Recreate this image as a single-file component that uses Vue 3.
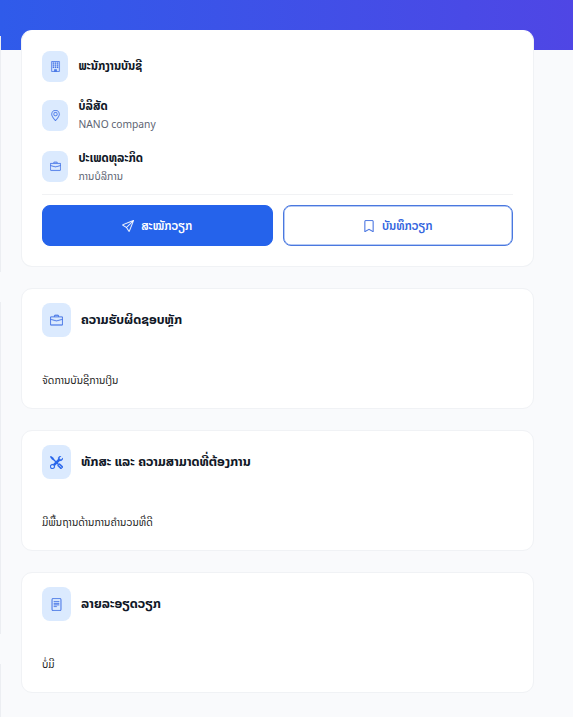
<script setup>
import { h } from 'vue'

const paths = {
  building: [
    'M4 2.5a.5.5 0 0 1 .5-.5h1a.5.5 0 0 1 .5.5v1a.5.5 0 0 1-.5.5h-1a.5.5 0 0 1-.5-.5zm3 0a.5.5 0 0 1 .5-.5h1a.5.5 0 0 1 .5.5v1a.5.5 0 0 1-.5.5h-1a.5.5 0 0 1-.5-.5zm3.5-.5a.5.5 0 0 0-.5.5v1a.5.5 0 0 0 .5.5h1a.5.5 0 0 0 .5-.5v-1a.5.5 0 0 0-.5-.5zM4 5.5a.5.5 0 0 1 .5-.5h1a.5.5 0 0 1 .5.5v1a.5.5 0 0 1-.5.5h-1a.5.5 0 0 1-.5-.5zM7.5 5a.5.5 0 0 0-.5.5v1a.5.5 0 0 0 .5.5h1a.5.5 0 0 0 .5-.5v-1a.5.5 0 0 0-.5-.5zm2.500.5a.5.5 0 0 1 .5-.5h1a.5.5 0 0 1 .5.5v1a.5.5 0 0 1-.5.5h-1a.5.5 0 0 1-.5-.5zM4.500 8a.5.5 0 0 0-.5.5v1a.5.5 0 0 0 .5.5h1a.5.5 0 0 0 .5-.5v-1a.5.5 0 0 0-.5-.5zm2.500.5a.5.5 0 0 1 .5-.5h1a.5.5 0 0 1 .5.5v1a.5.5 0 0 1-.5.5h-1a.5.5 0 0 1-.5-.5zm3.500-.5a.5.5 0 0 0-.5.5v1a.5.5 0 0 0 .5.5h1a.5.5 0 0 0 .5-.5v-1a.5.5 0 0 0-.5-.5z',
    'M2 1a1 1 0 0 1 1-1h10a1 1 0 0 1 1 1v14a1 1 0 0 1-1 1H3a1 1 0 0 1-1-1zm11 0H3v14h3v-2.500a.5.5 0 0 1 .5-.5h3a.5.5 0 0 1 .5.5V15h3z'
  ],
  pin: [
    'M12.166 8.940c-.524 1.062-1.234 2.120-1.960 3.070A32 32 0 0 1 8 14.580a32 32 0 0 1-2.206-2.570c-.726-.950-1.436-2.008-1.960-3.070C3.304 7.867 3 6.862 3 6a5 5 0 0 1 10 0c0 .862-.305 1.867-.834 2.940M8 16s6-5.686 6-10A6 6 0 0 0 2 6c0 4.314 6 10 6 10',
    'M8 8a2 2 0 1 1 0-4 2 2 0 0 1 0 4m0 1a3 3 0 1 0 0-6 3 3 0 0 0 0 6'
  ],
  briefcase: [
    'M6.500 1A1.500 1.500 0 0 0 5 2.500V3H1.500A1.500 1.500 0 0 0 0 4.500v8A1.500 1.500 0 0 0 1.500 14h13a1.500 1.500 0 0 0 1.500-1.500v-8A1.500 1.500 0 0 0 14.500 3H11v-.5A1.500 1.500 0 0 0 9.500 1zm0 1h3a.5.5 0 0 1 .5.5V3H6v-.5a.5.5 0 0 1 .5-.5m1.886 6.914L15 7.151V12.500a.5.5 0 0 1-.5.5h-13a.5.5 0 0 1-.5-.5V7.150l6.614 1.764a1.500 1.500 0 0 0 .772 0M1.500 4h13a.5.5 0 0 1 .5.5v1.616L8.129 7.948a.5.5 0 0 1-.258 0L1 6.116V4.500a.5.5 0 0 1 .5-.5'
  ],
  send: [
    'M15.854.146a.5.5 0 0 1 .11.54l-5.819 14.547a.75.75 0 0 1-1.329.124l-3.178-4.995L.643 7.184a.75.75 0 0 1 .124-1.330L15.314.037a.5.5 0 0 1 .54.11ZM6.636 10.070l2.761 4.338L14.130 2.576zm6.787-8.201L1.591 6.602l4.339 2.760z'
  ],
  bookmark: [
    'M2 2a2 2 0 0 1 2-2h8a2 2 0 0 1 2 2v13.500a.5.5 0 0 1-.777.416L8 13.101l-5.223 2.815A.5.5 0 0 1 2 15.500zm2-1a1 1 0 0 0-1 1v12.566l4.723-2.482a.5.5 0 0 1 .554 0L13 14.566V2a1 1 0 0 0-1-1z'
  ],
  tools: [
    'M1 0 0 1l2.200 3.081a1 1 0 0 0 .815.419h.070a1 1 0 0 1 .708.293l2.675 2.675-2.617 2.654A3.003 3.003 0 0 0 0 13a3 3 0 1 0 5.878-.851l2.654-2.617.968.968-.305.914a1 1 0 0 0 .242 1.023l3.270 3.270a.997.997 0 0 0 1.414 0l1.586-1.586a.997.997 0 0 0 0-1.414l-3.270-3.270a1 1 0 0 0-1.023-.242L10.500 9.500l-.960-.960 2.680-2.643A3.005 3.005 0 0 0 16 3q0-.405-.102-.777l-2.140 2.141L12 4l-.364-1.757L13.777.102a3 3 0 0 0-3.675 3.680L7.462 6.460 4.793 3.793a1 1 0 0 1-.293-.707v-.071a1 1 0 0 0-.419-.814zm9.646 10.646a.5.5 0 0 1 .708 0l2.914 2.915a.5.5 0 0 1-.707.707l-2.915-2.914a.5.5 0 0 1 0-.708M3 11l.471.242.529.026.287.445.445.287.026.529L5 13l-.242.471-.026.529-.445.287-.287.445-.529.026L3 15l-.471-.242L2 14.732l-.287-.445L1.268 14l-.026-.529L1 13l.242-.471.026-.529.445-.287.287-.445.529-.026z'
  ],
  file: [
    'M5 4a.5.5 0 0 0 0 1h6a.5.5 0 0 0 0-1zm-.5 2.500A.5.5 0 0 1 5 6h6a.5.5 0 0 1 0 1H5a.5.5 0 0 1-.5-.5M5 8a.5.5 0 0 0 0 1h6a.5.5 0 0 0 0-1zm0 2a.5.5 0 0 0 0 1h3a.5.5 0 0 0 0-1z',
    'M2 2a2 2 0 0 1 2-2h8a2 2 0 0 1 2 2v12a2 2 0 0 1-2 2H4a2 2 0 0 1-2-2zm10-1H4a1 1 0 0 0-1 1v12a1 1 0 0 0 1 1h8a1 1 0 0 0 1-1V2a1 1 0 0 0-1-1'
  ]
}

const Icon = (props) =>
  h('svg', { viewBox: '0 0 16 16', fill: 'currentColor', stroke: 'currentColor', 'stroke-width': '0.25', 'aria-hidden': 'true' },
    paths[props.name].map((d) => h('path', { d })))
Icon.props = ['name']

const facts = [
  { key: 'role', icon: 'building', label: 'ພະນັກງານບັນຊີ' },
  { key: 'company', icon: 'pin', label: 'ບໍລິສັດ', value: 'NANO company' },
  { key: 'sector', icon: 'briefcase', label: 'ປະເພດທຸລະກິດ', value: 'ການບໍລິການ' }
]

const sections = [
  { key: 'duty', icon: 'briefcase', title: 'ຄວາມຮັບຜິດຊອບຫຼັກ', body: 'ຈັດການບັນຊີການເງິນ' },
  { key: 'skill', icon: 'tools', title: 'ທັກສະ ແລະ ຄວາມສາມາດທີ່ຕ້ອງການ', body: 'ມີພື້ນຖານດ້ານການຄຳນວນທີ່ດີ' },
  { key: 'detail', icon: 'file', title: 'ລາຍລະອຽດວຽກ', body: 'ບໍ່ມີ' }
]
</script>

<template>
  <div class="page">
    <aside class="side">
      <div class="side-card first"></div>
      <div class="side-card second"></div>
      <div class="side-card third"></div>
    </aside>
    <main class="main">
      <section class="card summary">
        <div class="facts">
          <div v-for="f in facts" :key="f.key" class="fact" :class="f.key">
            <span class="badge"><Icon :name="f.icon" /></span>
            <div class="fact-text">
              <strong><span class="t">{{ f.label }}</span></strong>
              <span v-if="f.value" class="value"><span class="t">{{ f.value }}</span></span>
            </div>
          </div>
        </div>
        <div class="actions">
          <button class="btn primary"><Icon name="send" /><span class="t">ສະໝັກວຽກ</span></button>
          <button class="btn outline"><Icon name="bookmark" /><span class="t">ບັນທຶກວຽກ</span></button>
        </div>
      </section>
      <section v-for="s in sections" :key="s.key" class="card section" :class="s.key">
        <header>
          <span class="badge large"><Icon :name="s.icon" /></span>
          <h2><span class="t">{{ s.title }}</span></h2>
        </header>
        <p><span class="t">{{ s.body }}</span></p>
      </section>
    </main>
  </div>
</template>

<style>
body { margin: 0; background: #f9fafc; }
</style>

<style scoped>
* { box-sizing: border-box; }
.page {
  height: 717px;
  overflow: hidden;
  display: flex;
  font-family: "Noto Sans", "Noto Sans Lao", "DejaVu Sans", sans-serif;
  color: #111827;
  background: linear-gradient(90deg, #2f5bea 0%, #4f46e5 100%) 0 0 / 100% 50px no-repeat #f9fafc;
}
.side { width: 1px; flex: none; padding-top: 36px; display: flex; flex-direction: column; gap: 30px; }
.side-card { background: #eceef2; flex: none; }
.first { height: 236px; }
.second { height: 332px; }
.third { height: 60px; }
.main { width: 513px; margin-left: 20px; padding-top: 30px; display: flex; flex-direction: column; gap: 21px; }
.card { background: #fff; border: 1px solid #f0f2f5; border-radius: 11px; padding: 0 20px; flex: none; }
.summary { height: 237px; padding-top: 20px; border-top-color: #fff; }
.t { white-space: nowrap; }
.facts { height: 144px; border-bottom: 1px solid #f1f2f4; }
.fact { height: 31px; display: flex; align-items: center; gap: 10.500px; }
.role .fact-text { padding-bottom: 1px; }
.company { margin-top: 17.500px; }
.sector { margin-top: 20.500px; }
.badge {
  width: 26px; height: 31px; border-radius: 8px; background: #dbeafe; color: #4a78e8;
  display: flex; align-items: center; justify-content: center; flex: none;
}
.badge svg { width: 11px; height: 11px; }
.badge.large { width: 28.500px; height: 34px; border-radius: 8px; }
.badge.large svg { width: 13px; height: 13px; }
.skill .badge { color: #2563eb; }
.fact-text { display: flex; flex-direction: column; }
.fact-text strong { font-size: 11.500px; line-height: 18px; font-weight: 700; }
.value { font-size: 10.250px; line-height: 19px; color: #5d6472; }
.company .fact-text, .sector .fact-text { padding-top: 1px; }
.actions { display: grid; grid-template-columns: 1fr 1fr; gap: 10px; padding-top: 10px; }
.btn {
  height: 41px; border-radius: 8px; border: 1px solid #2563eb; padding: 0;
  display: flex; align-items: center; justify-content: center; gap: 7px;
  font: 600 11.600px "Noto Sans", "Noto Sans Lao", "DejaVu Sans", sans-serif;
}
.btn svg { width: 12px; height: 12px; }
.primary { background: #2563eb; color: #fff; }
.outline { background: #fff; color: #3465de; border-color: #4a78df; box-shadow: inset 0 0 0 .5px #6f96ea; }
.section { height: 121px; padding-top: 14px; }
header { display: flex; align-items: center; gap: 10.500px; }
h2 { margin: 0; padding-bottom: 2px; font-size: 12.850px; line-height: 24px; font-weight: 700; }
p { margin: 33px 0 0; font-size: 10.300px; line-height: 20px; color: #222; }
</style>
